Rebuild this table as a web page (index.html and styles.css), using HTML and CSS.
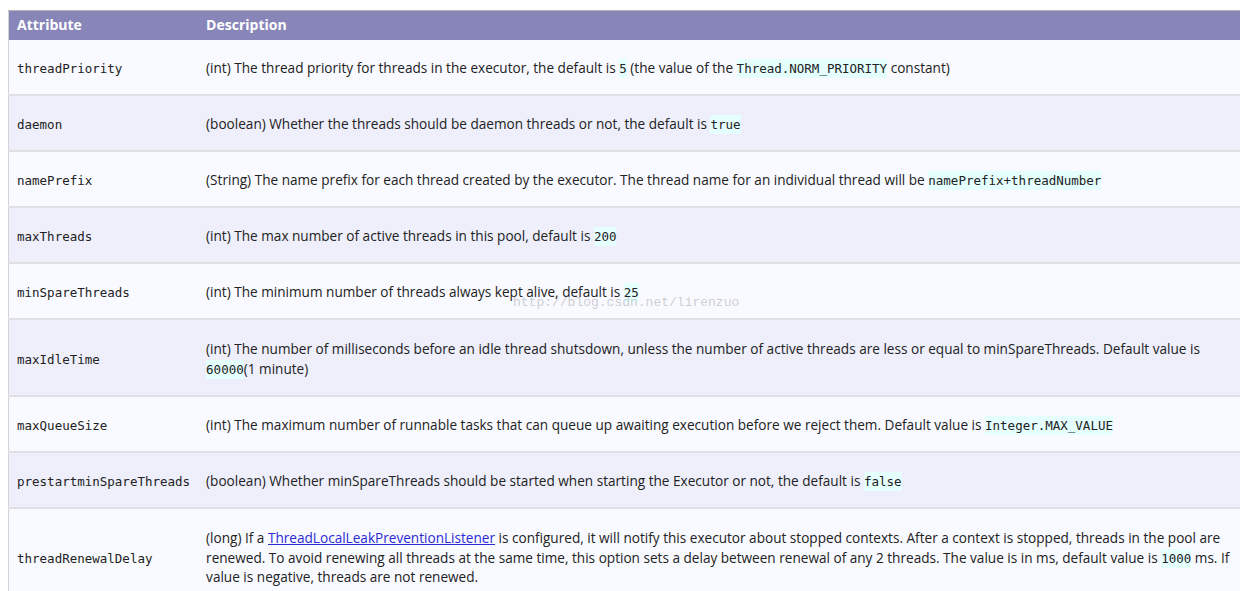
FILE: index.html
```html
<!DOCTYPE html>
<html>
<head>
<meta charset="utf-8">
<link rel="stylesheet" href="styles.css">
</head>
<body>
<div class="page">
<table class="attrs">
<thead>
<tr><th class="c1">Attribute</th><th class="c2">Description</th></tr>
</thead>
<tbody>
<tr><td class="c1"><code>threadPriority</code></td><td class="c2">(int) The thread priority for threads in the executor, the default is <code class="hl">5</code> (the value of the <code class="hl">Thread.NORM_PRIORITY</code> constant)</td></tr>
<tr><td class="c1"><code>daemon</code></td><td class="c2">(boolean) Whether the threads should be daemon threads or not, the default is <code class="hl">true</code></td></tr>
<tr><td class="c1"><code>namePrefix</code></td><td class="c2">(String) The name prefix for each thread created by the executor. The thread name for an individual thread will be <code class="hl">namePrefix+threadNumber</code></td></tr>
<tr><td class="c1"><code>maxThreads</code></td><td class="c2">(int) The max number of active threads in this pool, default is <code class="hl">200</code></td></tr>
<tr><td class="c1"><code>minSpareThreads</code></td><td class="c2">(int) The minimum number of threads always kept alive, default is <code class="hl">25</code></td></tr>
<tr class="tall"><td class="c1"><code>maxIdleTime</code></td><td class="c2">(int) The number of milliseconds before an idle thread shutsdown, unless the number of active threads are less or equal to minSpareThreads. Default value is <code class="hl">60000</code>(1 minute)</td></tr>
<tr><td class="c1"><code>maxQueueSize</code></td><td class="c2">(int) The maximum number of runnable tasks that can queue up awaiting execution before we reject them. Default value is <code class="hl">Integer.MAX_VALUE</code></td></tr>
<tr><td class="c1"><code>prestartminSpareThreads</code></td><td class="c2">(boolean) Whether minSpareThreads should be started when starting the Executor or not, the default is <code class="hl">false</code></td></tr>
<tr class="tall"><td class="c1"><code>threadRenewalDelay</code></td><td class="c2">(long) If a <a href="#">ThreadLocalLeakPreventionListener</a> is configured, it will notify this executor about stopped contexts. After a context is stopped, threads in the pool are renewed. To avoid renewing all threads at the same time, this option sets a delay between renewal of any 2 threads. The value is in ms, default value is <code class="hl">1000</code> ms. If value is negative, threads are not renewed.</td></tr>
</tbody>
</table>
<div class="watermark">http://blog.csdn.net/lirenzuo</div>
</div>
</body>
</html>
```

FILE: styles.css
```css
html, body {
  margin: 0;
  padding: 0;
  background: #ffffff;
  overflow: hidden;
}
body {
  width: 1240px;
  height: 591px;
}
.page {
  position: relative;
  padding: 10px 0 0 8px;
}
.attrs {
  width: 1248px;
  border-collapse: collapse;
  font-family: "Open Sans", "Noto Sans", sans-serif;
  font-size: 13.6px;
  color: #222;
  border-left: 1px solid #d4d4d4;
  border-top: 1px solid #b4b4b4;
}
.attrs th {
  background: #8886b9;
  color: #ffffff;
  font-weight: bold;
  text-align: left;
  font-size: 14px;
  line-height: 20px;
  padding: 4px 8px 5px 8px;
  height: 20px;
}
.attrs td {
  line-height: 20px;
  padding: 18px 8px 16px 8px;
  border-bottom: 2px solid #dfdfe4;
  vertical-align: middle;
}
.attrs tr.tall td {
  line-height: 19.5px;
  padding-top: 19px;
  padding-bottom: 17px;
}
.attrs tbody tr:nth-child(odd) td {
  background: #f9faff;
}
.attrs tbody tr:nth-child(even) td {
  background: #eeeffb;
}
.c1 {
  width: 173px;
}
code {
  font-family: "DejaVu Sans Mono", "Liberation Mono", monospace;
  font-size: 12.5px;
  line-height: 0;
  color: #222;
}
code.hl {
  background: #e5fefe;
  padding: 2px 0;
}
a {
  color: #2b2bd6;
  text-decoration: underline;
}
.watermark {
  position: absolute;
  left: 513px;
  top: 295px;
  font-family: "Liberation Mono", monospace;
  font-size: 13px;
  color: rgba(160, 160, 160, 0.5);
  pointer-events: none;
}
```
